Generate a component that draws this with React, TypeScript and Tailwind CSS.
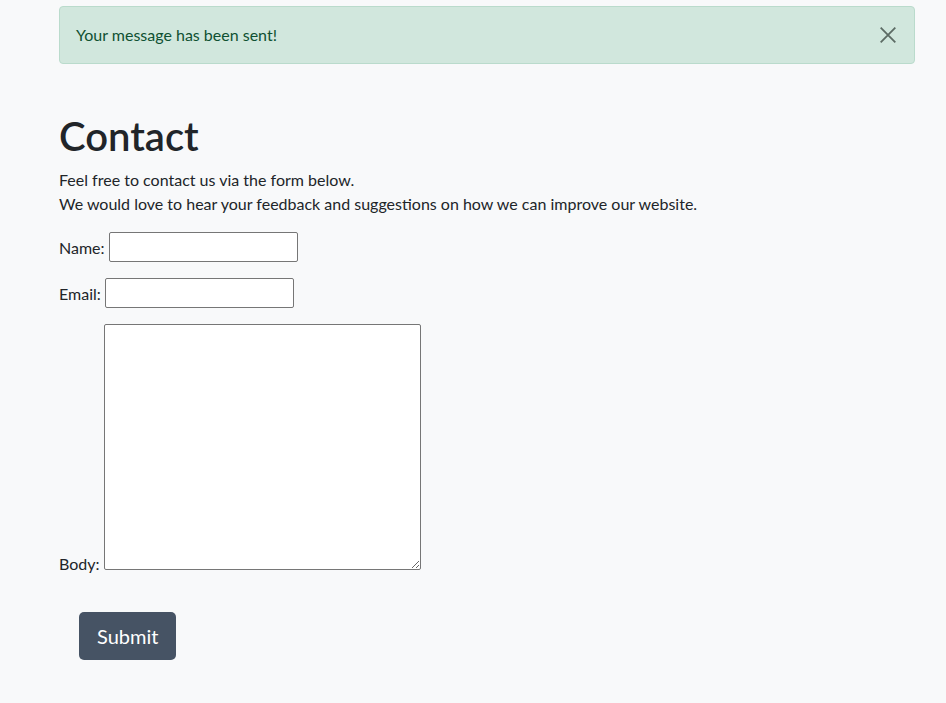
import React, { useState } from 'react';

export default function App() {
  const [showAlert, setShowAlert] = useState(true);

  return (
    <div className="min-h-screen bg-[#f8f9fa] text-[#212529] font-['Segoe_UI','Lato',sans-serif] text-[16px] leading-6">
      <div className="pl-[59px] pr-[31px] pt-[6px]">
        {showAlert && (
          <div className="flex items-center justify-between h-[58px] pl-4 pr-[14px] rounded-[4px] border border-[#badbcc] bg-[#d1e7dd] text-[#0f5132]">
            <span>Your message has been sent!</span>
            <button onClick={() => setShowAlert(false)} className="w-6 h-6 flex items-center justify-center text-[#5c6b64]" aria-label="Close">
              <svg width="18" height="18" viewBox="0 0 16 16" fill="none" stroke="currentColor" strokeWidth="1.6">
                <path d="M1.5 1.5l13 13M14.5 1.5l-13 13" />
              </svg>
            </button>
          </div>
        )}

        <h1 className="mt-[48px] mb-2 text-[40px] leading-[48px] font-semibold">Contact</h1>
        <p>Feel free to contact us via the form below.</p>
        <p>We would love to hear your feedback and suggestions on how we can improve our website.</p>

        <form className="mt-4" onSubmit={(e) => e.preventDefault()}>
          <div className="mb-4">
            <label htmlFor="name">Name:</label>{' '}
            <input id="name" type="text" className="w-[189px] h-[30px] bg-white border border-[#767676] rounded-[2px] px-1" />
          </div>
          <div className="mb-4">
            <label htmlFor="email">Email:</label>{' '}
            <input id="email" type="email" className="w-[189px] h-[30px] bg-white border border-[#767676] rounded-[2px] px-1" />
          </div>
          <div className="leading-[0]">
            <label htmlFor="body" className="leading-6">Body:</label>{' '}
            <textarea id="body" className="w-[317px] h-[246px] bg-white border border-[#767676] rounded-[2px] p-1 align-baseline" />
          </div>
          <button type="submit" className="mt-[36px] ml-5 h-12 px-[18px] rounded-[5px] bg-[#465364] text-white text-[20px]">
            Submit
          </button>
        </form>
      </div>
    </div>
  );
}
